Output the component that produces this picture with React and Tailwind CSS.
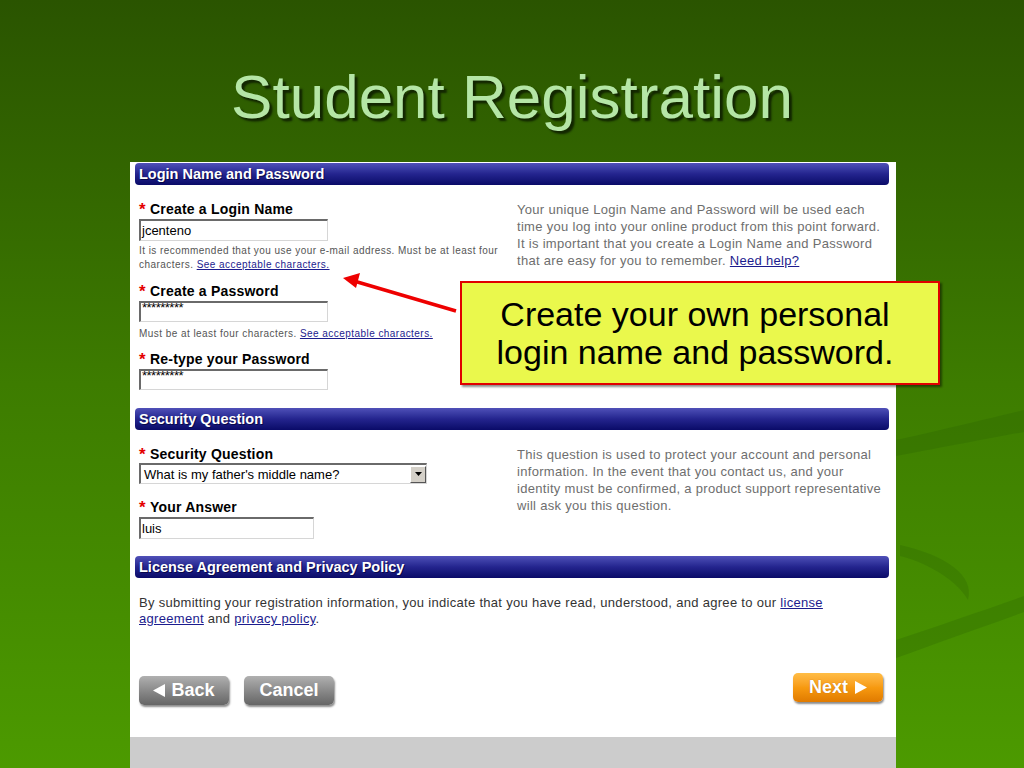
import React from 'react';

// slide: green backdrop, form screenshot, yellow callout with arrow

function SectionHeader({ children }) {
  return (
    <div className="ml-[5px] mr-[7px] h-[22px] rounded-[4px] bg-linear-to-b from-[#5050b8] via-[#24248e] to-[#0a0a68] pl-[4px] text-[14.5px] font-bold leading-[22px] text-white [text-shadow:1px_1px_0_#08084a]">
      {children}
    </div>
  );
}

function Label({ children, className = '' }) {
  return (
    <div className={`flex h-[15px] items-start ${className}`}>
      <span className="w-[11px] text-[17px] font-bold leading-[16px] text-[#e40000]">*</span>
      <span className="text-[14px] font-bold leading-[15px] tracking-[0.2px] text-black">{children}</span>
    </div>
  );
}

function Field({ className = '', children }) {
  return (
    <div
      className={`border-t-2 border-l-2 border-r border-b border-t-[#6a6a6a] border-l-[#6a6a6a] border-r-[#d6d6d6] border-b-[#d6d6d6] bg-white pl-[1px] text-[13px] text-black ${className}`}
    >
      {children}
    </div>
  );
}

function Link({ children }) {
  return <span className="text-[#1c1c8e] underline">{children}</span>;
}

function GreyButton({ children }) {
  return (
    <div className="flex h-[29px] w-[90px] items-center justify-center gap-[6px] rounded-[5px] bg-linear-to-b from-[#b0b0b0] via-[#8a8a8a] to-[#666] text-[18px] font-bold text-white shadow-[1px_2px_2px_rgba(0,0,0,0.45)]">
      {children}
    </div>
  );
}

export default function App() {
  return (
    <div className="relative h-[768px] w-[1024px] overflow-hidden bg-linear-to-b from-[#2a5400] via-[#3d7c00] to-[#4c9a00] font-['Liberation_Sans',Arial,sans-serif]">
      <svg className="absolute inset-0" width="1024" height="768" viewBox="0 0 1024 768">
        <path d="M896 440 C 950 428, 990 418, 1024 410 L 1024 432 C 990 438, 950 446, 896 456 Z" fill="#2f6600" opacity="0.35" />
        <path d="M900 545 C 945 555, 975 575, 968 600 C 960 585, 935 565, 900 556 Z" fill="#2f6600" opacity="0.3" />
        <path d="M896 640 C 940 625, 985 610, 1024 596 L 1024 612 C 985 626, 940 642, 896 658 Z" fill="#2f6600" opacity="0.3" />
      </svg>

      <div className="relative flex flex-col">
        <h1 className="pt-[66px] text-center text-[62px] leading-[62px] text-[#b5e6a6] [text-shadow:3px_3px_2px_#122600]">
          Student Registration
        </h1>

        <div className="ml-[130px] mt-[34px] flex h-[606px] w-[766px] flex-col bg-white">
          <div className="mt-[1px]">
            <SectionHeader>Login Name and Password</SectionHeader>
          </div>

          <div className="grid grid-cols-[378px_1fr] pl-[9px] pt-[16px]">
            <div className="flex flex-col">
              <Label className="mt-[1px]">Create a Login Name</Label>
              <Field className="mt-[2px] h-[22px] w-[189px] leading-[19px]">jcenteno</Field>
              <p className="mt-[3px] whitespace-nowrap text-[10px] leading-[14px] tracking-[0.45px] text-[#555]">
                It is recommended that you use your e-mail address. Must be at least four
                <br />
                characters. <Link>See acceptable characters.</Link>
              </p>
              <Label className="mt-[12px]">Create a Password</Label>
              <Field className="mt-[2px] h-[21px] w-[189px] text-[9px] leading-[10px] tracking-[-0.5px]">*********</Field>
              <p className="mt-[5px] whitespace-nowrap text-[10px] leading-[14px] tracking-[0.45px] text-[#555]">
                Must be at least four characters. <Link>See acceptable characters.</Link>
              </p>
              <Label className="mt-[11px]">Re-type your Password</Label>
              <Field className="mt-[2px] h-[21px] w-[189px] text-[9px] leading-[10px] tracking-[-0.5px]">*********</Field>
            </div>
            <p className="whitespace-nowrap text-[13px] leading-[17px] tracking-[0.3px] text-[#6e6e6e]">
              Your unique Login Name and Password will be used each
              <br />
              time you log into your online product from this point forward.
              <br />
              It is important that you create a Login Name and Password
              <br />
              that are easy for you to remember. <Link>Need help?</Link>
            </p>
          </div>

          <div className="mt-[18px]">
            <SectionHeader>Security Question</SectionHeader>
          </div>

          <div className="grid grid-cols-[378px_1fr] pl-[9px] pt-[16px]">
            <div className="flex flex-col">
              <Label className="mt-[1px]">Security Question</Label>
              <Field className="mt-[1px] flex h-[21px] w-[288px] items-center justify-between pl-[3px] pr-0">
                <span className="leading-[17px]">What is my father's middle name?</span>
                <span className="flex h-[17px] w-[16px] items-center justify-center border border-t-white border-l-white border-r-[#555] border-b-[#555] bg-[#d4d0c8]">
                  <svg width="7" height="4" viewBox="0 0 7 4">
                    <path d="M0 0 H7 L3.5 4 Z" fill="#000" />
                  </svg>
                </span>
              </Field>
              <Label className="mt-[16px]">Your Answer</Label>
              <Field className="mt-[2px] h-[22px] w-[175px] leading-[19px]">luis</Field>
            </div>
            <p className="whitespace-nowrap text-[13px] leading-[17px] tracking-[0.3px] text-[#6e6e6e]">
              This question is used to protect your account and personal
              <br />
              information. In the event that you contact us, and your
              <br />
              identity must be confirmed, a product support representative
              <br />
              will ask you this question.
            </p>
          </div>

          <div className="mt-[17px]">
            <SectionHeader>License Agreement and Privacy Policy</SectionHeader>
          </div>

          <p className="mt-[17px] whitespace-nowrap pl-[9px] text-[13px] leading-[16px] tracking-[0.3px] text-[#333]">
            By submitting your registration information, you indicate that you have read, understood, and agree to our <Link>license</Link>
            <br />
            <Link>agreement</Link> and <Link>privacy policy</Link>.
          </p>

          <div className="mt-[46px] flex items-start justify-between pl-[9px] pr-[13px]">
            <div className="mt-[3px] flex gap-[15px]">
              <GreyButton>
                <svg width="12" height="13" viewBox="0 0 12 13">
                  <path d="M0 6.5 L12 0 V13 Z" fill="#fff" />
                </svg>
                <span>Back</span>
              </GreyButton>
              <GreyButton>Cancel</GreyButton>
            </div>
            <div className="flex h-[29px] w-[90px] items-center justify-center gap-[7px] rounded-[5px] bg-linear-to-b from-[#ffbd45] via-[#f79a10] to-[#e07a00] text-[18px] font-bold text-white shadow-[1px_2px_2px_rgba(0,0,0,0.45)] [text-shadow:0_0_1px_#b06000]">
              <span>Next</span>
              <svg width="12" height="13" viewBox="0 0 12 13">
                <path d="M12 6.5 L0 0 V13 Z" fill="#fff" />
              </svg>
            </div>
          </div>

          <div className="mt-auto h-[31px] bg-[#cccccc]" />
        </div>
      </div>

      <svg className="absolute left-[330px] top-[265px]" width="140" height="60" viewBox="0 0 140 60">
        <line x1="126" y1="46" x2="24" y2="16" stroke="#ee0000" strokeWidth="3.5" />
        <path d="M13 13 L30 8 L26 23 Z" fill="#ee0000" />
      </svg>

      <div className="absolute left-[460px] top-[281px] flex h-[104px] w-[480px] flex-col items-center justify-center border-2 border-[#e00000] bg-[#eaf84c] pr-[10px] text-[34px] leading-[38px] text-black shadow-[2px_2px_2px_rgba(0,0,0,0.45)]">
        <span>Create your own personal</span>
        <span>login name and password.</span>
      </div>
    </div>
  );
}
